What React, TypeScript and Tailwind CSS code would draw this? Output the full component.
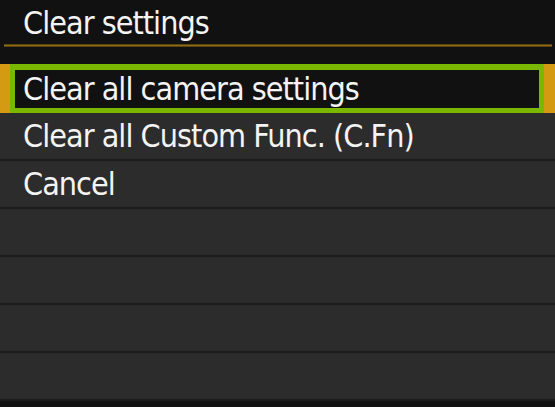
const ITEMS = [
  "Clear all Custom Func. (C.Fn)",
  "Cancel",
  "",
  "",
  "",
  "",
];

export default function App() {
  return (
    <div
      className="w-[555px] h-[407px] bg-[#111111] text-white overflow-hidden"
      style={{ fontFamily: "'DejaVu Sans Condensed', 'DejaVu Sans', sans-serif" }}
    >
      {/* Title */}
      <div className="h-[64px] flex flex-col">
        <div className="h-[44px] flex items-center pl-[23px] pt-[2px] text-[32px] leading-none tracking-[-0.03em] text-[#f4f4f4]">
          Clear settings
        </div>
        <div className="mx-[4px] mr-[3px] h-[3px] bg-[#8d6b14] border-y border-[#5a4410]" />
      </div>

      {/* Selected row */}
      <div className="h-[49px] flex bg-[#d49b12]">
        <div className="ml-[10px] mr-[11px] flex-1 flex items-center border-[5px] border-t-[6px] border-[#7ab800] bg-[#111111] pl-[8px] text-[32px] leading-none tracking-[-0.03em] text-[#f4f4f4]">
          Clear all camera settings
        </div>
      </div>

      {/* Other rows */}
      {ITEMS.map((label, i) => (
        <div
          key={i}
          className="h-[48px] flex items-center pl-[23px] bg-[#2c2c2c] border-b-2 border-[#1b1b1b] text-[32px] leading-none tracking-[-0.03em] text-[#f4f4f4]"
        >
          {label}
        </div>
      ))}
    </div>
  );
}
